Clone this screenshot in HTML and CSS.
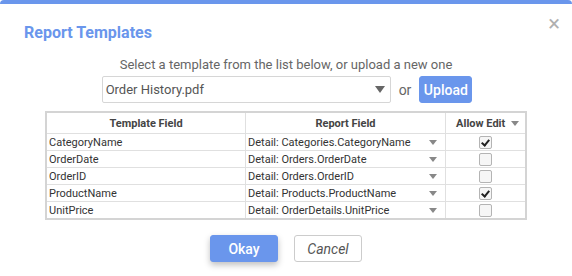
FILE: index.html
```html
<!DOCTYPE html>
<html lang="en">
<head>
  <meta charset="UTF-8" />
  <title>Report Templates</title>
  <link rel="stylesheet" href="styles.css">
</head>
<body>
  <div class="dialog">
    <div class="dialog-head">
      <h2 class="dialog-title">Report Templates</h2>
      <span class="close">&times;</span>
    </div>
    <p class="hint">Select a template from the list below, or upload a new one</p>
    <div class="picker">
      <div class="select">
        <span>Order History.pdf</span>
        <span class="caret"></span>
      </div>
      <span class="or">or</span>
      <button class="btn btn-primary upload">Upload</button>
    </div>

    <table class="fields">
      <thead>
        <tr>
          <th class="col-tpl">Template Field</th>
          <th class="col-rep">Report Field</th>
          <th class="col-edit">Allow Edit <span class="caret small"></span></th>
        </tr>
      </thead>
      <tbody>
        <tr><td>CategoryName</td><td><div class="cell-select">Detail: Categories.CategoryName<span class="caret small"></span></div></td><td class="chk"><span class="box checked"></span></td></tr>
        <tr><td>OrderDate</td><td><div class="cell-select">Detail: Orders.OrderDate<span class="caret small"></span></div></td><td class="chk"><span class="box"></span></td></tr>
        <tr><td>OrderID</td><td><div class="cell-select">Detail: Orders.OrderID<span class="caret small"></span></div></td><td class="chk"><span class="box"></span></td></tr>
        <tr><td>ProductName</td><td><div class="cell-select">Detail: Products.ProductName<span class="caret small"></span></div></td><td class="chk"><span class="box checked"></span></td></tr>
        <tr><td>UnitPrice</td><td><div class="cell-select">Detail: OrderDetails.UnitPrice<span class="caret small"></span></div></td><td class="chk"><span class="box"></span></td></tr>
      </tbody>
    </table>

    <div class="actions">
      <button class="btn btn-primary okay">Okay</button>
      <button class="btn btn-default cancel">Cancel</button>
    </div>
  </div>
</body>
</html>
```

FILE: styles.css
```css
body {
  margin: 0;
  font-family: Roboto, "Liberation Sans", sans-serif;
  background: #fff;
}

.dialog {
  width: 572px;
  height: 276px;
  box-sizing: border-box;
  border-top: 4px solid #6a96ec;
  border-radius: 4px 4px 0 0;
  background: #fff;
}

.dialog-head {
  display: flex;
  justify-content: space-between;
  align-items: flex-start;
  padding: 0 12px 0 24px;
}

.dialog-title {
  margin: 18px 0 0;
  height: 22px;
  font-size: 16px;
  line-height: 22px;
  font-weight: 700;
  color: #6a96ec;
}

.close {
  margin-top: 9px;
  font-size: 22px;
  line-height: 22px;
  color: #b0b0b0;
}

.hint {
  margin: 13px 0 0;
  text-align: center;
  font-size: 13px;
  color: #666;
}

.picker {
  display: flex;
  align-items: center;
  justify-content: center;
  margin-top: 4px;
  padding-left: 2px;
}

.select {
  width: 289px;
  height: 27px;
  box-sizing: border-box;
  border: 1px solid #d6d6d6;
  border-radius: 2px;
  display: flex;
  align-items: center;
  justify-content: space-between;
  padding: 0 4px 0 3px;
  font-size: 13px;
  color: #555;
}

.caret {
  display: inline-block;
  width: 0;
  height: 0;
  border-left: 5px solid transparent;
  border-right: 5px solid transparent;
  border-top: 7px solid #666;
  margin-right: 1px;
}

.caret.small {
  border-left-width: 4px;
  border-right-width: 4px;
  border-top: 5px solid #888;
}

.or {
  margin: 0 8px 0 8px;
  font-size: 14px;
  color: #666;
}

.btn {
  font-family: Roboto, "Liberation Sans", sans-serif;
  font-size: 14px;
  height: 27px;
  border-radius: 3px;
  cursor: pointer;
}

.btn-primary {
  background: #6a96ec;
  border: 1px solid #6a96ec;
  color: #fff;
  font-weight: 500;
}

.upload {
  width: 53px;
  padding: 0;
}

.fields {
  margin: 8px 0 0 45px;
  width: 482px;
  border-collapse: collapse;
  border: 2px solid #d4d4d4;
  font-size: 11px;
  color: #333;
  table-layout: fixed;
}

.fields th,
.fields td {
  border: 1px solid #e0e0e0;
  padding: 0 2px;
  height: 16px;
  white-space: nowrap;
}

.fields th {
  height: 20px;
  font-weight: 700;
  color: #444;
  text-align: center;
}

.col-tpl { width: 194px; }
.col-rep { width: 195px; }
.col-edit { text-align: right !important; padding-right: 5px !important; }
.col-edit .caret { margin-left: 3px; vertical-align: 1px; }

.cell-select {
  display: flex;
  justify-content: space-between;
  align-items: center;
  padding-right: 5px;
}

.chk { text-align: center; }

.box {
  display: inline-block;
  width: 11px;
  height: 11px;
  border: 1px solid #b4b4b4;
  border-radius: 2px;
  background: #f6f6f6;
  vertical-align: middle;
  position: relative;
}

.box.checked::after {
  content: "";
  position: absolute;
  left: 3px;
  top: 1px;
  width: 3px;
  height: 6px;
  border: solid #222;
  border-width: 0 2px 2px 0;
  transform: rotate(40deg);
}

.actions {
  display: flex;
  justify-content: center;
  gap: 16px;
  margin-top: 15px;
}

.okay {
  width: 68px;
  box-shadow: 0 3px 6px rgba(0, 0, 0, 0.25);
}

.btn-default {
  width: 68px;
  background: #fff;
  border: 1px solid #ccc;
  color: #555;
  font-style: italic;
}
```
